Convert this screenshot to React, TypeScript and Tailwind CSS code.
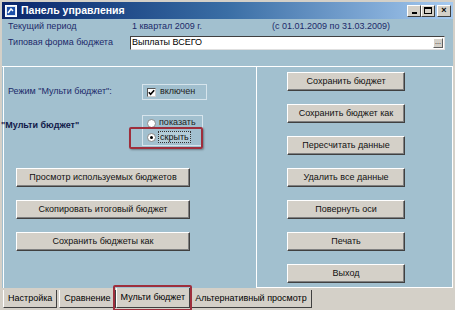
import React from "react";

const font = { fontFamily: '"Liberation Sans", Arial, sans-serif' };

function Btn({ label, w }: { label: string; w: string }) {
  return (
    <div
      className={`${w} h-[19px] flex items-center justify-center bg-[#d4d0c8] border border-t-white border-l-white border-r-[#404040] border-b-[#404040] shadow-[inset_-1px_-1px_0_#808080] text-[9px] text-[#111]`}
    >
      {label}
    </div>
  );
}

function WinBtn({ children }: { children: React.ReactNode }) {
  return (
    <div className="w-[14px] h-[12px] flex items-center justify-center bg-[#d4d0c8] border border-t-white border-l-white border-r-[#404040] border-b-[#404040] text-[9px] leading-none font-bold text-black">
      {children}
    </div>
  );
}

function Tab({ label, active }: { label: string; active?: boolean }) {
  return (
    <div
      className={`h-[18px] px-[4px] flex items-center text-[9px] text-black bg-[#d4d0c8] border-l border-l-white border-r border-r-[#404040] border-b border-b-[#404040] ${
        active ? "h-[20px] -mt-[2px]" : ""
      }`}
    >
      {label}
    </div>
  );
}

export default function App() {
  const rightButtons = [
    "Сохранить бюджет",
    "Сохранить бюджет как",
    "Пересчитать данные",
    "Удалить все данные",
    "Повернуть оси",
    "Печать",
    "Выход",
  ];
  const leftButtons = [
    "Просмотр используемых бюджетов",
    "Скопировать итоговый бюджет",
    "Сохранить бюджеты как",
  ];

  return (
    <div style={font} className="w-[455px] h-[310px] bg-[#d4d0c8] flex flex-col overflow-hidden">
      {/* title bar */}
      <div className="mx-[2px] mt-[2px] h-[17px] flex items-center bg-gradient-to-r from-[#0a246a] via-[#3a6ea5] to-[#a6caf0] pl-[3px] pr-[2px]">
        <svg width="12" height="12" viewBox="0 0 12 12">
          <rect x="0.5" y="0.5" width="11" height="11" fill="#dfe8f5" stroke="#fff" />
          <rect x="2" y="2" width="8" height="8" fill="#1d4fa8" />
          <path d="M3 8 L6 4 L8 6" stroke="#fff" strokeWidth="1.5" fill="none" />
        </svg>
        <span className="ml-[4px] text-white font-bold text-[10.5px]">Панель управления</span>
        <div className="ml-auto flex items-center">
          <WinBtn>
            <span className="mt-[4px] block w-[5px] h-[2px] bg-black" />
          </WinBtn>
          <WinBtn>
            <span className="block w-[8px] h-[7px] border border-black border-t-2" />
          </WinBtn>
          <div className="ml-[2px]">
            <WinBtn>×</WinBtn>
          </div>
        </div>
      </div>

      {/* body */}
      <div className="mx-[2px] h-[269px] bg-[#a2c0cf] flex flex-col text-[9px]">
        <div className="h-[47px] pl-[6px] pt-[1px] flex flex-col text-[#1c2a6a]">
          <div className="h-[13px] flex items-center">
            <span className="w-[124px]">Текущий период</span>
            <span className="w-[140px]">1 квартал 2009 г.</span>
            <span>(с 01.01.2009 по 31.03.2009)</span>
          </div>
          <div className="mt-[3px] h-[14px] flex items-center">
            <span className="w-[122px]">Типовая форма бюджета</span>
            <div className="w-[315px] h-[14px] bg-white border border-t-[#404040] border-l-[#404040] border-r-[#e0e0e0] border-b-[#e0e0e0] flex items-center pl-[1px] text-black">
              Выплаты ВСЕГО
              <div className="ml-auto mr-[1px] w-[10px] h-[10px] bg-[#d4d0c8] border border-t-white border-l-white border-r-[#606060] border-b-[#606060] text-[7px] leading-[5px] text-center">
                ...
              </div>
            </div>
          </div>
        </div>

        <div className="h-[1px] bg-white" />

        <div className="flex h-[221px]">
          {/* left panel */}
          <div className="ml-[1px] w-[254px] border-l border-r border-white flex flex-col">
            <div className="mt-[17px] pl-[4px] flex items-center h-[16px]">
              <span className="w-[134px] text-[#1c2a6a]">Режим "Мульти бюджет":</span>
              <div className="w-[65px] h-[16px] border border-[#d6e4ec] flex items-center pl-[4px]">
                <div className="w-[9px] h-[9px] bg-white border border-t-[#555] border-l-[#555] border-r-[#ccc] border-b-[#ccc] flex items-center justify-center">
                  <svg width="7" height="7" viewBox="0 0 7 7">
                    <path d="M0.8 3.2 L2.6 5.2 L6.2 1.2" stroke="#000" strokeWidth="1.6" fill="none" />
                  </svg>
                </div>
                <span className="ml-[4px] text-[#222]">включен</span>
              </div>
            </div>

            <div className="mt-[15px] flex">
              <span className="-ml-[3px] mt-[4px] w-[141px] font-bold text-[#111a4a]">"Мульти бюджет"</span>
              <div className="relative w-[61px] h-[31px] border border-[#d6e4ec] flex flex-col pl-[4px]">
                <div className="h-[12px] mt-[1px] flex items-center">
                  <span className="w-[9px] h-[9px] rounded-full bg-white border border-[#888]" />
                  <span className="ml-[3px] text-[#222]">показать</span>
                </div>
                <div className="h-[12px] mt-[2px] flex items-center">
                  <span className="w-[9px] h-[9px] rounded-full bg-white border border-[#888] flex items-center justify-center">
                    <span className="w-[3px] h-[3px] rounded-full bg-black" />
                  </span>
                  <span className="ml-[2px] px-[1px] border border-dotted border-[#333] bg-[#b4cdd9] text-[#111] leading-[10px]">
                    скрыть
                  </span>
                </div>
                <div className="absolute left-[-14px] top-[11px] w-[74px] h-[22px] border-2 border-[#9e2e3c] rounded-[2px] shadow-[1px_1px_2px_rgba(0,0,0,0.35)]" />
              </div>
            </div>

            <div className="mt-[22px] pl-[12px] flex flex-col gap-[13px]">
              {leftButtons.map((b) => (
                <Btn key={b} label={b} w="w-[174px]" />
              ))}
            </div>
          </div>

          {/* right panel */}
          <div className="flex-1 border-r border-b border-white pt-[5px] pl-[30px] flex flex-col gap-[13px]">
            {rightButtons.map((b) => (
              <Btn key={b} label={b} w="w-[118px]" />
            ))}
          </div>
        </div>
      </div>

      {/* tabs */}
      <div className="relative flex-1 flex items-start pt-[2px] pl-[3px]">
        <Tab label="Настройка" />
        <div className="ml-[2px]">
          <Tab label="Сравнение" />
        </div>
        <Tab label="Мульти бюджет" active />
        <Tab label="Альтернативный просмотр" />
        <div className="absolute left-[113px] top-[-3px] w-[79px] h-[26px] border-2 border-[#9e2e3c] rounded-[2px]" />
      </div>
    </div>
  );
}
